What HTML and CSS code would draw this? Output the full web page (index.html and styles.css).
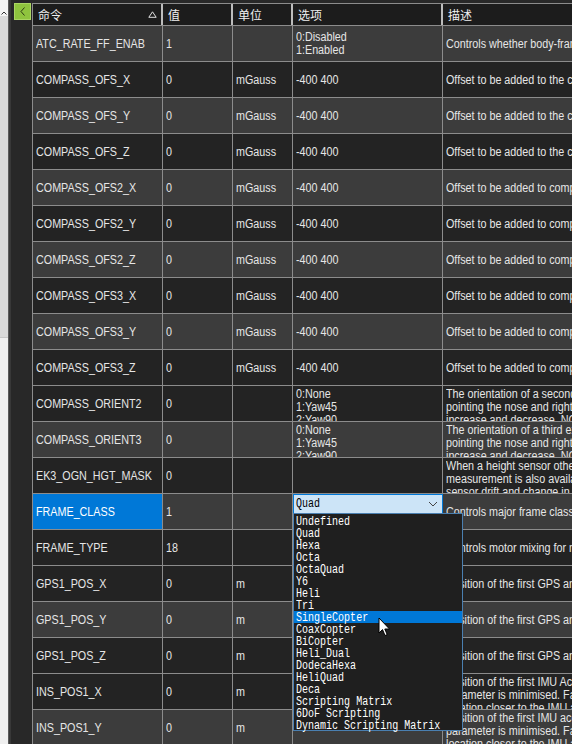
FILE: index.html
```html
<!DOCTYPE html>
<html>
<head>
<meta charset="utf-8">
<title>Params</title>
<link rel="stylesheet" href="styles.css">
</head>
<body>
<div class="app">
  <div class="side">
    <div class="side-up"><svg width="6" height="4" viewBox="0 0 6 4"><polyline points="0.5,3.5 3,1 5.5,3.5" fill="none" stroke="#333" stroke-width="1"/></svg></div>
    <div class="side-track"></div>
    <div class="side-rest"></div>
  </div>
  <div class="gutter">
    <div class="collapse"><svg width="6" height="9" viewBox="0 0 6 9"><polyline points="4.5,0.5 1,4.5 4.5,8.5" fill="none" stroke="#2c3a14" stroke-width="1"/></svg></div>
  </div>
  <div class="gridwrap">
    <div class="grid">
      <div class="row head">
        <div class="h">命令<svg class="sort" width="9" height="7" viewBox="0 0 9 7"><polygon points="4.5,0.8 8.2,6.3 0.8,6.3" fill="none" stroke="#e0e0e0" stroke-width="1"/></svg></div>
        <div class="h">值</div>
        <div class="h">单位</div>
        <div class="h">选项</div>
        <div class="h">描述</div>
      </div>

      <div class="row l">
        <div class="c"><span class="t">ATC_RATE_FF_ENAB</span></div><div class="c"><span class="t">1</span></div><div class="c"></div>
        <div class="c"><div class="t">0:Disabled<br>1:Enabled</div></div>
        <div class="c"><span class="t">Controls whether body-frame rate feedfoward is enabled or disabled</span></div>
      </div>
      <div class="row d">
        <div class="c"><span class="t">COMPASS_OFS_X</span></div><div class="c"><span class="t">0</span></div><div class="c"><span class="t">mGauss</span></div><div class="c"><span class="t">-400 400</span></div>
        <div class="c"><span class="t">Offset to be added to the compass x-axis values to compensate for metal in the frame</span></div>
      </div>
      <div class="row l">
        <div class="c"><span class="t">COMPASS_OFS_Y</span></div><div class="c"><span class="t">0</span></div><div class="c"><span class="t">mGauss</span></div><div class="c"><span class="t">-400 400</span></div>
        <div class="c"><span class="t">Offset to be added to the compass y-axis values to compensate for metal in the frame</span></div>
      </div>
      <div class="row d">
        <div class="c"><span class="t">COMPASS_OFS_Z</span></div><div class="c"><span class="t">0</span></div><div class="c"><span class="t">mGauss</span></div><div class="c"><span class="t">-400 400</span></div>
        <div class="c"><span class="t">Offset to be added to the compass z-axis values to compensate for metal in the frame</span></div>
      </div>
      <div class="row l">
        <div class="c"><span class="t">COMPASS_OFS2_X</span></div><div class="c"><span class="t">0</span></div><div class="c"><span class="t">mGauss</span></div><div class="c"><span class="t">-400 400</span></div>
        <div class="c"><span class="t">Offset to be added to compass2's x-axis values to compensate for metal in the frame</span></div>
      </div>
      <div class="row d">
        <div class="c"><span class="t">COMPASS_OFS2_Y</span></div><div class="c"><span class="t">0</span></div><div class="c"><span class="t">mGauss</span></div><div class="c"><span class="t">-400 400</span></div>
        <div class="c"><span class="t">Offset to be added to compass2's y-axis values to compensate for metal in the frame</span></div>
      </div>
      <div class="row l">
        <div class="c"><span class="t">COMPASS_OFS2_Z</span></div><div class="c"><span class="t">0</span></div><div class="c"><span class="t">mGauss</span></div><div class="c"><span class="t">-400 400</span></div>
        <div class="c"><span class="t">Offset to be added to compass2's z-axis values to compensate for metal in the frame</span></div>
      </div>
      <div class="row d">
        <div class="c"><span class="t">COMPASS_OFS3_X</span></div><div class="c"><span class="t">0</span></div><div class="c"><span class="t">mGauss</span></div><div class="c"><span class="t">-400 400</span></div>
        <div class="c"><span class="t">Offset to be added to compass3's x-axis values to compensate for metal in the frame</span></div>
      </div>
      <div class="row l">
        <div class="c"><span class="t">COMPASS_OFS3_Y</span></div><div class="c"><span class="t">0</span></div><div class="c"><span class="t">mGauss</span></div><div class="c"><span class="t">-400 400</span></div>
        <div class="c"><span class="t">Offset to be added to compass3's y-axis values to compensate for metal in the frame</span></div>
      </div>
      <div class="row d">
        <div class="c"><span class="t">COMPASS_OFS3_Z</span></div><div class="c"><span class="t">0</span></div><div class="c"><span class="t">mGauss</span></div><div class="c"><span class="t">-400 400</span></div>
        <div class="c"><span class="t">Offset to be added to compass3's z-axis values to compensate for metal in the frame</span></div>
      </div>
      <div class="row d">
        <div class="c"><span class="t">COMPASS_ORIENT2</span></div><div class="c"><span class="t">0</span></div><div class="c"></div>
        <div class="c top"><div class="t">0:None<br>1:Yaw45<br>2:Yaw90</div></div>
        <div class="c top"><div class="t">The orientation of a second external compass relative to the vehicle frame.<br>pointing the nose and right wing down (so the pitch and roll both<br>increase and decrease. NOTE: For internal compasses, AHRS_ORIENT</div></div>
      </div>
      <div class="row l">
        <div class="c"><span class="t">COMPASS_ORIENT3</span></div><div class="c"><span class="t">0</span></div><div class="c"></div>
        <div class="c top"><div class="t">0:None<br>1:Yaw45<br>2:Yaw90</div></div>
        <div class="c top"><div class="t">The orientation of a third external compass relative to the vehicle frame.<br>pointing the nose and right wing down (so the pitch and roll both<br>increase and decrease. NOTE: For internal compasses, AHRS_ORIENT</div></div>
      </div>
      <div class="row d">
        <div class="c"><span class="t">EK3_OGN_HGT_MASK</span></div><div class="c"><span class="t">0</span></div><div class="c"></div><div class="c"></div>
        <div class="c top"><div class="t">When a height sensor other than GPS is used as the primary height source<br>measurement is also available, the EKF can estimate the offset<br>sensor drift and change in ambient pressure over time.</div></div>
      </div>
      <div class="row l">
        <div class="c sel"><span class="t">FRAME_CLASS</span></div><div class="c"><span class="t">1</span></div><div class="c"></div>
        <div class="c combo-cell">
          <div class="combo"><span class="m">Quad</span><svg width="10" height="6" viewBox="0 0 10 6"><polyline points="1,1 5,5 9,1" fill="none" stroke="#444" stroke-width="1"/></svg></div>
          <div class="list">
            <div class="it"><span class="m">Undefined</span></div>
            <div class="it"><span class="m">Quad</span></div>
            <div class="it"><span class="m">Hexa</span></div>
            <div class="it"><span class="m">Octa</span></div>
            <div class="it"><span class="m">OctaQuad</span></div>
            <div class="it"><span class="m">Y6</span></div>
            <div class="it"><span class="m">Heli</span></div>
            <div class="it"><span class="m">Tri</span></div>
            <div class="it hi"><span class="m">SingleCopter</span></div>
            <div class="it"><span class="m">CoaxCopter</span></div>
            <div class="it"><span class="m">BiCopter</span></div>
            <div class="it"><span class="m">Heli_Dual</span></div>
            <div class="it"><span class="m">DodecaHexa</span></div>
            <div class="it"><span class="m">HeliQuad</span></div>
            <div class="it"><span class="m">Deca</span></div>
            <div class="it"><span class="m">Scripting Matrix</span></div>
            <div class="it"><span class="m">6DoF Scripting</span></div>
            <div class="it"><span class="m">Dynamic Scripting Matrix</span></div>
          </div>
        </div>
        <div class="c"><span class="t">Controls major frame class for multicopter component</span></div>
      </div>
      <div class="row d">
        <div class="c"><span class="t">FRAME_TYPE</span></div><div class="c"><span class="t">18</span></div><div class="c"></div><div class="c"></div>
        <div class="c"><span class="t">Controls motor mixing for multicopters.</span></div>
      </div>
      <div class="row d">
        <div class="c"><span class="t">GPS1_POS_X</span></div><div class="c"><span class="t">0</span></div><div class="c"><span class="t">m</span></div><div class="c"></div>
        <div class="c"><span class="t">Position of the first GPS antenna in body frame.</span></div>
      </div>
      <div class="row l">
        <div class="c"><span class="t">GPS1_POS_Y</span></div><div class="c"><span class="t">0</span></div><div class="c"><span class="t">m</span></div><div class="c"></div>
        <div class="c"><span class="t">Position of the first GPS antenna in body frame.</span></div>
      </div>
      <div class="row d">
        <div class="c"><span class="t">GPS1_POS_Z</span></div><div class="c"><span class="t">0</span></div><div class="c"><span class="t">m</span></div><div class="c"></div>
        <div class="c"><span class="t">Position of the first GPS antenna in body frame.</span></div>
      </div>
      <div class="row d">
        <div class="c"><span class="t">INS_POS1_X</span></div><div class="c"><span class="t">0</span></div><div class="c"><span class="t">m</span></div><div class="c"></div>
        <div class="c top"><div class="t">Position of the first IMU Accelerometer and Gyro in body frame.<br>parameter is minimised. Failure to set these parameters can<br>location closer to the IMU and will give best accuracy.</div></div>
      </div>
      <div class="row l">
        <div class="c"><span class="t">INS_POS1_Y</span></div><div class="c"><span class="t">0</span></div><div class="c"><span class="t">m</span></div><div class="c"></div>
        <div class="c top"><div class="t">Position of the first IMU accelerometer and gyro in body frame.<br>parameter is minimised. Failure to set these parameters can<br>location closer to the IMU and will give best accuracy.</div></div>
      </div>
    </div>
  </div>
  <svg class="cursor" width="13" height="20" viewBox="0 0 13 20"><path d="M1,1 L1,16 L4.5,12.6 L7,18.5 L9.2,17.6 L6.8,12 L11.5,12 Z" fill="#fff" stroke="#000" stroke-width="1" stroke-linejoin="miter"/></svg>
</div>
</body>
</html>
```

FILE: styles.css
```css
* { box-sizing: border-box; }
html, body { margin: 0; padding: 0; }
body {
  width: 572px;
  height: 744px;
  overflow: hidden;
  background: #282828;
  font-family: "Liberation Sans", Arial, sans-serif;
  font-size: 12px;
  color: #e6e6e6;
}
.app { position: relative; display: flex; height: 744px; }

.side {
  width: 9px;
  flex: none;
  display: flex;
  flex-direction: column;
  border-right: 1px solid #5a5a5a;
  background: #efefef;
}
.side-up { height: 16px; background: #f3f3f3; display: flex; align-items: flex-end; padding: 0 0 1px 1px; }
.side-track { height: 322px; background: #d9d9d9; border-bottom: 1px solid #c6c6c6; }
.side-rest { flex: 1; background: #efefef; }

.gutter {
  width: 23px;
  flex: none;
  background: #282828;
  border-left: 2px solid #383838;
  padding: 3px 0 0 3px;
}
.collapse {
  width: 17px;
  height: 17px;
  background: #8fc43e;
  border: 1px solid #abd663;
  display: flex;
  align-items: center;
  justify-content: center;
}

.gridwrap { flex: 1; overflow: hidden; padding-top: 3px; }
.grid { width: max-content; border-left: 1px solid #8c8c8c; }
.row {
  display: grid;
  grid-template-columns: 130px 70px 60px 150px 300px;
  height: 36px;
  border-bottom: 1px solid #8c8c8c;
}
.row.l { background: #3c3c3c; }
.row.d { background: #232323; }

.row.head {
  height: 23px;
  border-top: 1px solid #8c8c8c;
  background: #1c1c1c;
}
.h {
  display: flex;
  align-items: center;
  padding-left: 5px;
  border-right: 2px solid #bdbdbd;
  font-family: "Noto Sans CJK SC", sans-serif;
  font-size: 12px;
  color: #f0f0f0;
}
.sort { margin-left: auto; margin-right: 4px; }

.c {
  display: flex;
  align-items: center;
  padding: 1px 3px 0;
  border-right: 1px solid #8c8c8c;
  overflow: hidden;
  white-space: nowrap;
  line-height: 13px;
  font-size: 12.5px;
}
.c.top { align-items: flex-start; padding-top: 2px; }
.c.sel { background: #0078d7; color: #fff; }
.t { transform: scaleX(0.86); transform-origin: 0 50%; }
.c.top .t { transform-origin: 0 0; }

.combo-cell { padding: 0; align-items: flex-start; overflow: visible; position: relative; }
.combo {
  width: 150px;
  height: 20px;
  flex: none;
  border: 1px solid #0078d7;
  background: #cce4f7;
  color: #000;
  display: flex;
  align-items: center;
  justify-content: space-between;
  padding: 0 4px 0 2px;
}
.m {
  display: inline-block;
  font-family: "Liberation Mono", monospace;
  font-size: 12px;
  transform: scaleX(0.835);
  transform-origin: 0 50%;
  white-space: pre;
}
.list {
  position: absolute;
  left: 0;
  top: 19px;
  width: 170px;
  height: 218px;
  z-index: 10;
  background: #1f1f1f;
  border: 1px solid #4a7fb0;
  padding-top: 1px;
}
.it {
  height: 12px;
  line-height: 12px;
  padding-left: 2px;
  color: #fff;
}
.it.hi { background: #0078d7; }

.cursor { position: absolute; left: 378px; top: 617px; z-index: 20; }
```
